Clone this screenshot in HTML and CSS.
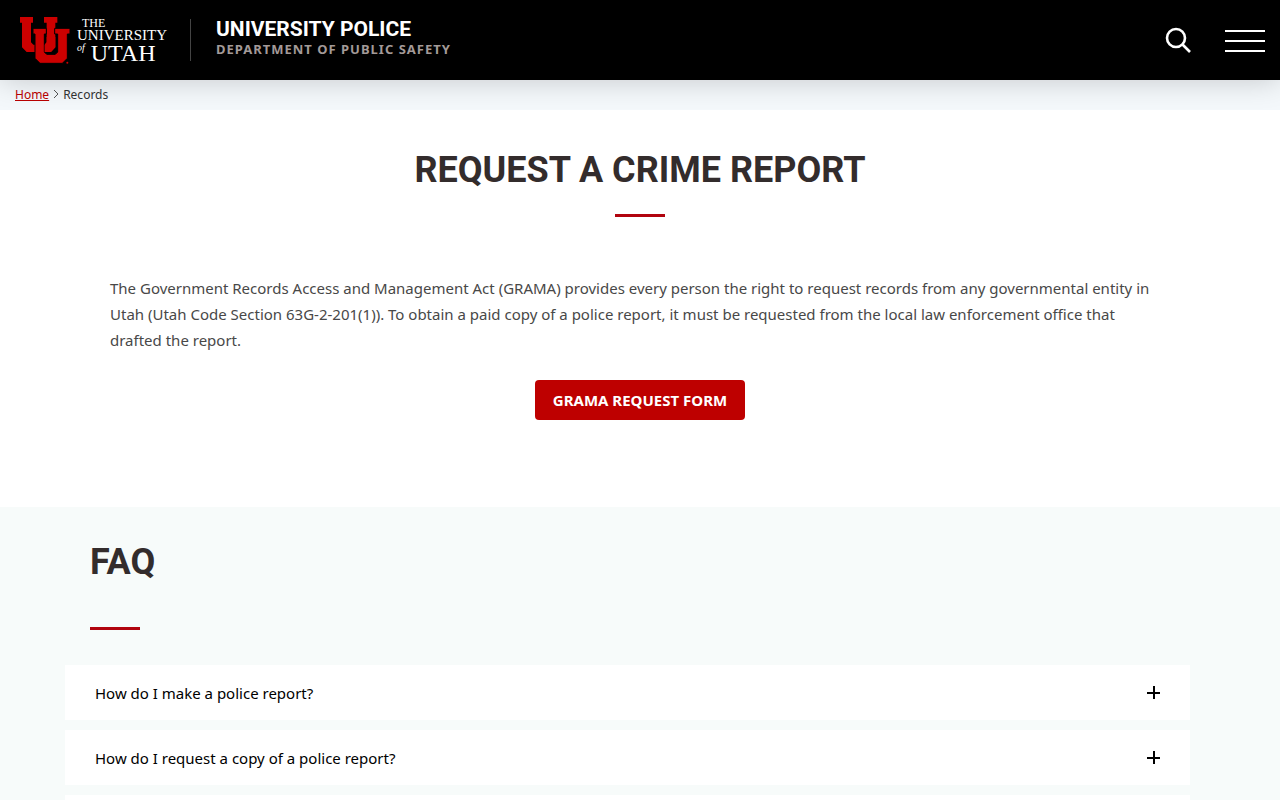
FILE: index.html
```html
<!DOCTYPE html>
<html lang="en">
<head>
    <meta charset="UTF-8">
    <meta name="viewport" content="width=device-width, initial-scale=1.0">
    <title>Records - University Police</title>
    <link rel="stylesheet" href="styles.css">
</head>
<body>
    <header class="site-header">
        <a class="logo" href="#" aria-label="The University of Utah">
            <svg class="logo-mark" viewBox="0 0 150 141" aria-hidden="true">
                <path d="M0 0H39V17H33V76L40 83H74L80 76V17H72V0H112V17H106V91L93 105H20L6 91V17H0Z"/>
                <path class="u-front" d="M39 34H79V51H73V105L80 112H106L113 105V51H104V34H150V51H142V124L127 139H60L45 124V51H39Z"/>
                <path d="M80 60H106V91L93 105H74V83L80 76Z"/>
                <circle cx="142" cy="137" r="3"/>
            </svg>
            <span class="logo-text">
                <span class="logo-the">THE</span>
                <span class="logo-university">UNIVERSITY</span>
                <span class="logo-utah"><i>of</i> UTAH</span>
            </span>
        </a>
        <div class="site-name">
            <a class="site-title" href="#">University Police</a>
            <a class="site-parent" href="#">Department of Public Safety</a>
        </div>
        <div class="header-tools">
            <button class="search-btn" type="button" aria-label="Search">
                <svg width="28" height="28" viewBox="0 0 28 28" aria-hidden="true">
                    <circle cx="12" cy="12" r="9"/>
                    <path d="M18.5 18.5L26 26"/>
                </svg>
            </button>
            <button class="menu-btn" type="button" aria-label="Menu">
                <span></span>
                <span></span>
                <span></span>
            </button>
        </div>
    </header>

    <nav class="breadcrumbs" aria-label="Breadcrumb">
        <a href="#">Home</a>
        <svg width="6" height="10" viewBox="0 0 6 10" aria-hidden="true"><path d="M1 1l4 4-4 4"/></svg>
        <span>Records</span>
    </nav>

    <main>
        <section class="intro">
            <h1>Request a Crime Report</h1>
            <p>The Government Records Access and Management Act (GRAMA) provides every person the right to request records from any governmental entity in Utah (Utah Code Section 63G-2-201(1)). To obtain a paid copy of a police report, it must be requested from the local law enforcement office that drafted the report.</p>
            <a class="btn" href="#">GRAMA Request Form</a>
        </section>

        <section class="faq">
            <h2>FAQ</h2>
            <div class="accordion">
                <button class="question" type="button">How do I make a police report?<span class="plus"></span></button>
                <button class="question" type="button">How do I request a copy of a police report?<span class="plus"></span></button>
                <button class="question" type="button" aria-label="More"><span class="plus"></span></button>
            </div>
        </section>
    </main>
</body>
</html>
```
FILE: styles.css
```css
* { box-sizing: border-box; }
body {
    margin: 0;
    font-family: "Noto Sans", sans-serif;
    font-size: 15px;
    color: #484848;
    background: #fff;
}
button { font: inherit; border: 0; cursor: pointer; }

/* Header */
.site-header {
    position: relative;
    display: flex;
    align-items: center;
    height: 80px;
    padding: 0 15px 0 20px;
    background: #000;
    box-shadow: 0 0 30px rgba(0,0,0,0.2);
}
.logo {
    display: flex;
    gap: 7px;
    padding-right: 23px;
    color: #fff;
    text-decoration: none;
}
.logo-mark { width: 50px; height: 47px; fill: #c00; }
.u-front { stroke: #000; stroke-width: 3; }
.logo-text {
    display: flex;
    flex-direction: column;
    font-family: "Liberation Serif", serif;
}
.logo-the { font-size: 12px; line-height: 12px; padding-left: 5px; }
.logo-university { font-size: 15px; line-height: 13px; }
.logo-utah { font-size: 24px; line-height: 22px; }
.logo-utah i { font-size: 10px; line-height: 0; vertical-align: 10px; }
.site-name {
    display: flex;
    flex-direction: column;
    padding: 0 0 2px 25px;
    border-left: 1px solid #444;
    text-transform: uppercase;
}
.site-name a { line-height: 20px; font-weight: 700; text-decoration: none; }
.site-title { font-family: Roboto, sans-serif; font-size: 21px; color: #fff; }
.site-parent { font-size: 13px; letter-spacing: 1px; color: #a39a98; }
.header-tools { display: flex; align-items: center; gap: 33px; margin-left: auto; }
.search-btn { padding: 0; background: none; }
.search-btn svg { display: block; fill: none; stroke: #fff; stroke-width: 2.6; }
.menu-btn {
    display: flex;
    flex-direction: column;
    gap: 8px;
    width: 40px;
    padding: 2px 0 0;
    background: none;
}
.menu-btn span { height: 2px; background: #fff; }

/* Breadcrumbs */
.breadcrumbs {
    display: flex;
    align-items: center;
    gap: 4px;
    height: 30px;
    padding: 0 15px 2px;
    font-size: 12px;
    color: #333;
    background: #f4f8fb;
}
.breadcrumbs a { color: #b00; }
.breadcrumbs svg { fill: none; stroke: #555; }

/* Intro */
.intro {
    display: flex;
    flex-direction: column;
    align-items: center;
    padding: 38px 110px 87px;
}
h1, h2 {
    margin: 0;
    font-family: Roboto, sans-serif;
    font-size: 36px;
    line-height: 44px;
    text-transform: uppercase;
    color: #332c2c;
}
h1::after, h2::after {
    content: "";
    display: block;
    width: 50px;
    height: 3px;
    background: #b1040e;
}
h1::after { margin: 22px auto 0; }
h2::after { margin-top: 43px; }
.intro p { margin: 58px 0 27px; line-height: 26px; }
.btn {
    padding: 0 18px;
    font-weight: 700;
    line-height: 40px;
    text-decoration: none;
    text-transform: uppercase;
    color: #fff;
    background: #be0000;
    border-radius: 4px;
}

/* FAQ */
.faq { padding: 33px 90px 40px; background: #f7fbfa; }
.accordion {
    display: flex;
    flex-direction: column;
    gap: 10px;
    margin: 35px 0 0 -25px;
}
.question {
    display: flex;
    justify-content: space-between;
    align-items: center;
    min-height: 55px;
    padding: 0 30px;
    color: #000;
    background: #fff;
}
.plus {
    width: 13px;
    height: 13px;
    margin-left: auto;
    background:
        linear-gradient(#000, #000) center / 13px 2px no-repeat,
        linear-gradient(#000, #000) center / 2px 13px no-repeat;
}
```
